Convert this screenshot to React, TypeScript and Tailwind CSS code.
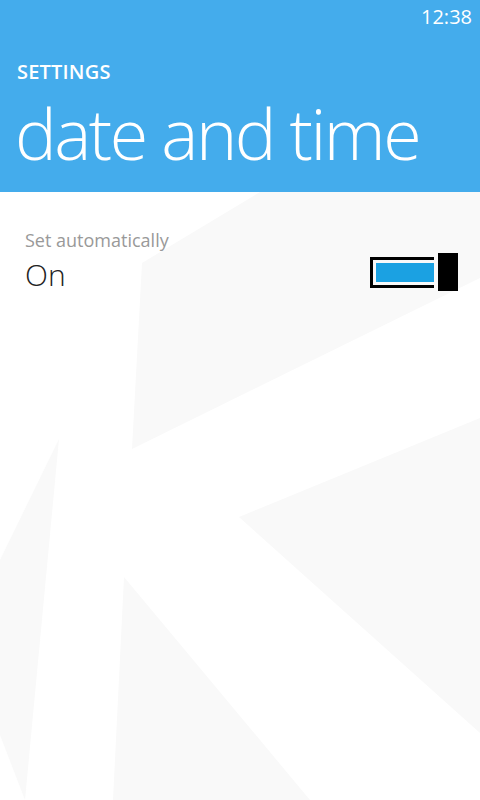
import React from "react";

const Backdrop = () => (
  <svg
    className="absolute inset-0 h-full w-full"
    viewBox="0 0 480 608"
    preserveAspectRatio="none"
  >
    <g fill="#f9f9f9">
      <polygon points="260,0 480,0 480,86 132,257 142,71" />
      <polygon points="0,368 59,247 25,608 0,543" />
      <polygon points="124,385 113,608 310,608" />
      <polygon points="239,325 480,226 480,541" />
    </g>
  </svg>
);

const Toggle = ({ on }: { on: boolean }) => (
  <div className="flex items-center">
    <div className="flex h-[31px] w-[64px] items-center border-y-[3px] border-l-[3px] border-black pl-[3px]">
      <div className={`h-[19px] flex-1 ${on ? "bg-[#1ba1e2]" : "bg-white"}`} />
    </div>
    <div className="ml-[4px] h-[38px] w-[20px] bg-black" />
  </div>
);

export default function App() {
  return (
    <div
      className="flex h-[800px] w-[480px] flex-col overflow-hidden bg-white"
      style={{ fontFamily: '"Open Sans", "Noto Sans", sans-serif' }}
    >
      <header className="flex h-[192px] flex-col bg-[#44acec] text-white">
        <div className="flex justify-end pr-[8px] pt-[4px] text-[20px] leading-[26px]">
          12:38
        </div>
        <div className="mt-[30px] pl-[17px] text-[20px] font-semibold leading-[24px] tracking-[0.2px]">
          SETTINGS
        </div>
        <h1 className="mt-[9px] pl-[15px] text-[70px] font-light leading-[80px] tracking-[-2.5px]">
          date and time
        </h1>
      </header>
      <main className="relative flex-1">
        <Backdrop />
        <div className="relative flex items-center justify-between pl-[25px] pr-[22px] pt-[35px]">
          <div className="flex flex-col">
            <span className="text-[18px] leading-[26px] text-[#999999]">
              Set automatically
            </span>
            <span className="mt-[2px] text-[30px] font-light leading-[40px] text-[#222222]">
              On
            </span>
          </div>
          <div className="mt-[22px]">
            <Toggle on />
          </div>
        </div>
      </main>
    </div>
  );
}
